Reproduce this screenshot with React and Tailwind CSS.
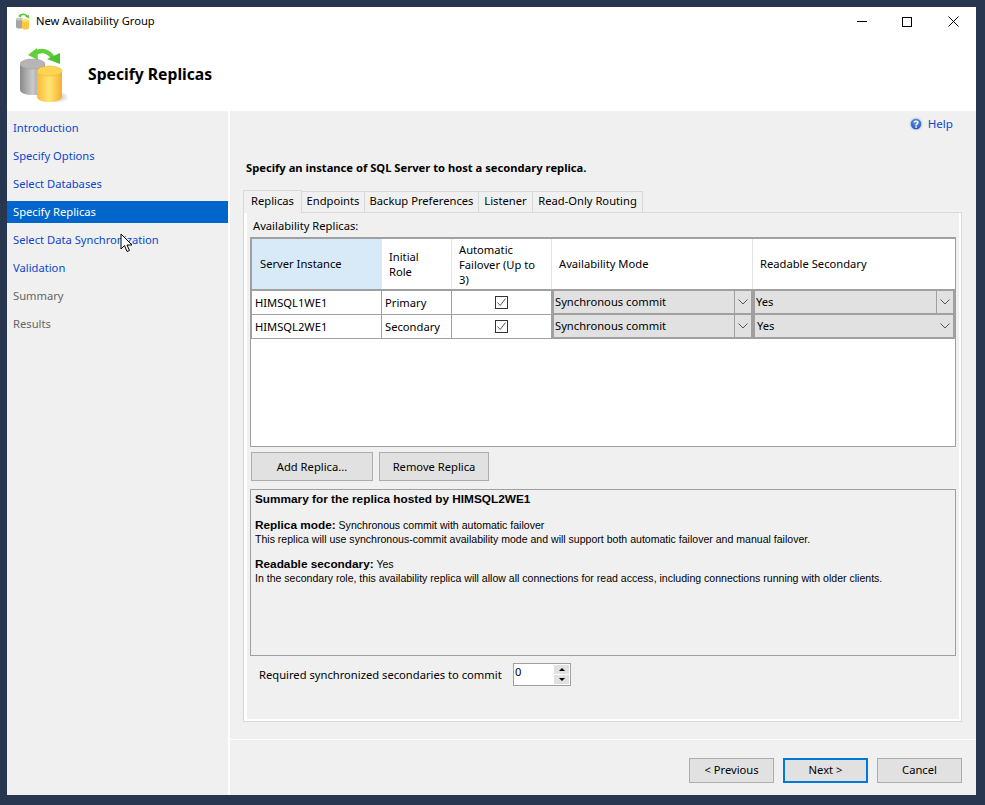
const ui = { fontFamily: '"Noto Sans", "Open Sans", sans-serif' };

function BigIcon() {
  return (
    <svg width="50" height="60" viewBox="0 0 50 60" className="block shrink-0">
      <defs>
        <linearGradient id="g1" x1="0" x2="1" y1="0" y2="0">
          <stop offset="0" stopColor="#8a8a8a" />
          <stop offset="0.5" stopColor="#c9c9c9" />
          <stop offset="1" stopColor="#8f8f8f" />
        </linearGradient>
        <linearGradient id="y1" x1="0" x2="1" y1="0" y2="0">
          <stop offset="0" stopColor="#fbb93a" />
          <stop offset="0.5" stopColor="#ffe673" />
          <stop offset="1" stopColor="#f7ad2e" />
        </linearGradient>
        <radialGradient id="sh" cx="0.5" cy="0.5" r="0.5">
          <stop offset="0" stopColor="#bbbbbb" />
          <stop offset="1" stopColor="#ffffff" />
        </radialGradient>
      </defs>
      <ellipse cx="38" cy="52" rx="11" ry="6" fill="url(#sh)" />
      <path d="M0 19v26c0 3 6 5 12.500 5S25 48 25 45V19z" fill="url(#g1)" />
      <ellipse cx="12.500" cy="19" rx="12.500" ry="5" fill="#b5b5b5" stroke="#9a9a9a" strokeWidth="0.5" />
      <path d="M17 26v26c0 3 6 5 12.500 5S42 55 42 52V26z" fill="url(#y1)" />
      <ellipse cx="29.500" cy="26" rx="12.500" ry="5" fill="#fdd552" stroke="#f0ae2c" strokeWidth="0.5" />
      <path d="M14 9C20 4 28 5 33 13" fill="none" stroke="#5fcf3c" strokeWidth="4.500" />
      <path d="M8 10l9-7 1 12z" fill="#5fcf3c" />
      <path d="M27 14l13-6v11z" fill="#4fc22e" />
    </svg>
  );
}

function SmallIcon() {
  return (
    <svg width="15" height="17" viewBox="0 0 15 17" className="block shrink-0">
      <path d="M0 6v8c0 1 2 1.500 3.500 1.500S7 15 7 14V6z" fill="#a5a5a5" />
      <ellipse cx="3.500" cy="6" rx="3.500" ry="1.500" fill="#c9c9c9" />
      <path d="M6 7v8c0 1 2 1.500 3.500 1.500S13 16 13 15V7z" fill="#fcc83f" />
      <ellipse cx="9.500" cy="7" rx="3.500" ry="1.500" fill="#ffe580" />
      <path d="M3.500 3C6 .500 9 .500 11 3" fill="none" stroke="#58c83a" strokeWidth="1.500" />
      <path d="M2 3l3-2 .3 3.500zM9 3.500l4-1.500v3.500z" fill="#58c83a" />
    </svg>
  );
}

function HelpIcon() {
  return (
    <svg width="14" height="14" viewBox="0 0 14 14" className="block">
      <defs>
        <radialGradient id="h1" cx="0.5" cy="0.35" r="0.7">
          <stop offset="0" stopColor="#6d9ee8" />
          <stop offset="1" stopColor="#1d4fb8" />
        </radialGradient>
      </defs>
      <circle cx="7" cy="7" r="6.500" fill="#c8d6ee" />
      <circle cx="7" cy="7" r="5.200" fill="url(#h1)" />
      <path d="M5 5.300C5.200 4 8.800 3.700 9 5.400c.1 1.400-1.900 1.600-1.900 3" fill="none" stroke="#fff" strokeWidth="1.500" />
      <rect x="6.300" y="9.300" width="1.600" height="1.500" fill="#fff" />
    </svg>
  );
}

function Chevron() {
  return (
    <svg width="10" height="6" viewBox="0 0 10 6" className="block">
      <path d="M.5 .5L5 5 9.500 .5" fill="none" stroke="#555" strokeWidth="1" />
    </svg>
  );
}

function Check() {
  return (
    <span className="w-[13px] h-[13px] border border-[#333] bg-white flex items-center justify-center">
      <svg width="11" height="11" viewBox="0 0 11 11" className="block">
        <path d="M1.500 5.500L4.200 8.500 9.500 1.500" fill="none" stroke="#555" strokeWidth="1" />
      </svg>
    </span>
  );
}

function Combo({ text, arrowBorder, pad }) {
  return (
    <div className="h-full flex items-center bg-[#e1e1e1] border-2 border-[#a0a0a0] border-t-0">
      <span className={`flex-1 truncate pt-px ${pad}`}>{text}</span>
      <span className={`w-[17px] h-full flex items-center justify-center ${arrowBorder ? "border-l border-[#a0a0a0]" : ""}`}>
        <Chevron />
      </span>
    </div>
  );
}

function Row({ name, role, last }) {
  const cell = "h-full flex items-center border-b border-[#a0a0a0] border-r px-[3px]";
  return (
    <div className="grid grid-cols-[130px_70px_100px_201px_202px] h-[24px] border-l border-[#a0a0a0]">
      <div className={`${cell} pt-px`}>{name}</div>
      <div className={`${cell} pt-px`}>{role}</div>
      <div className={`${cell} justify-center`}><Check /></div>
      <Combo text="Synchronous commit" arrowBorder pad="pl-[1px]" />
      <Combo text="Yes" arrowBorder={!last} pad={last ? "pl-[2px]" : "pl-[1px]"} />
    </div>
  );
}

function Btn({ children, className = "" }) {
  return (
    <button className={`flex items-center justify-center bg-[#e1e1e1] border border-[#adadad] ${className}`}>
      {children}
    </button>
  );
}

const nav = [
  ["Introduction", "link"],
  ["Specify Options", "link"],
  ["Select Databases", "link"],
  ["Specify Replicas", "sel"],
  ["Select Data Synchronization", "link"],
  ["Validation", "link"],
  ["Summary", "off"],
  ["Results", "off"],
];

export default function App() {
  return (
    <div className="w-[985px] h-[805px] bg-[#28364f] pt-[7px] pl-[7px] overflow-hidden text-[11.2px] text-black relative" style={ui}>
      <div className="w-[969px] h-[788px] bg-[#f0f0f0] flex flex-col">
        <div className="h-[104px] bg-white shrink-0 flex flex-col">
          <div className="h-[29px] flex items-center pl-[9px]">
            <SmallIcon />
            <span className="ml-[5px] flex-1">New Availability Group</span>
            <div className="flex items-center">
              <span className="w-[44px] h-[29px] flex items-center justify-center">
                <span className="w-[10px] h-px bg-black" />
              </span>
              <span className="w-[46px] h-[29px] flex items-center justify-center">
                <span className="w-[10px] h-[10px] border border-black" />
              </span>
              <span className="w-[46px] h-[29px] flex items-center justify-center">
                <svg width="11" height="11" viewBox="0 0 11 11"><path d="M.5 .5l10 10M10.500 .5l-10 10" stroke="#000" strokeWidth="1" /></svg>
              </span>
            </div>
          </div>
          <div className="flex-1 flex items-start pl-[13px] pt-[9px]">
            <BigIcon />
            <span className="ml-[18px] mt-[18px] text-[15.7px] leading-[22px] font-bold">Specify Replicas</span>
          </div>
        </div>

        <div className="flex-1 flex min-h-0">
          <div className="w-[223px] shrink-0 border-r-2 border-white pt-[3px]">
            {nav.map(([t, k]) => (
              <div key={t} className="h-[28px] py-[3px]">
                <div className={`h-[22px] flex items-center pl-[6px] ${k === "sel" ? "bg-[#0066cc] text-white" : k === "link" ? "text-[#0d47c9]" : "text-[#666]"}`}>
                  {t}
                </div>
              </div>
            ))}
          </div>

          <div className="flex-1 flex flex-col min-w-0">
            <div className="flex-1 border-b border-white flex flex-col pl-[13px] pr-[14px]">
              <div className="h-[26px] flex items-center justify-end pr-[9px] gap-[5px]">
                <HelpIcon />
                <span className="text-[#0d47c9] text-[11.6px]">Help</span>
              </div>
              <div className="mt-[22px] h-[18px] pl-[3px] flex items-center font-bold">
                Specify an instance of SQL Server to host a secondary replica.
              </div>

              <div className="mt-[12px] flex items-end h-[23px]">
                <div className="h-[23px] w-[59px] bg-[#f0f0f0] border border-b-0 border-[#d9d9d9] flex items-center justify-center pb-[2px] -mb-px z-10">Replicas</div>
                {[["Endpoints", "w-[63px]"], ["Backup Preferences", "w-[114px]"], ["Listener", "w-[54px]"], ["Read-Only Routing", "w-[110px]"]].map(([t, w]) => (
                  <div key={t} className={`h-[21px] ${w} bg-[#f0f0f0] border border-l-0 border-b-0 border-[#d9d9d9] flex items-center justify-center pb-px`}>{t}</div>
                ))}
              </div>

              <div className="h-[510px] w-[719px] border border-[#d9d9d9]">
                <div className="h-full border-white border-l-[3px] border-r-2 border-b-2 px-[3px] pt-[2px]">
                  <div className="h-[22px] flex items-center pl-[3px]">Availability Replicas:</div>
                  <div className="h-[210px] w-[706px] border border-[#a0a0a0] border-t-2 bg-white">
                    <div className="grid grid-cols-[130px_70px_100px_201px_202px] h-[52px] border-b-2 border-l border-[#a0a0a0]">
                      <div className="bg-[#d8e9f8] flex items-center pl-[8px] pt-px">Server Instance</div>
                      <div className="border-r border-[#e3e3e3] flex items-center pl-[7px] pr-[8px] leading-[15px]">Initial Role</div>
                      <div className="border-r border-[#e3e3e3] flex items-center pl-[7px] pr-[8px] leading-[15px]">Automatic Failover (Up to 3)</div>
                      <div className="border-r border-[#e3e3e3] flex items-center px-[7px] pt-px">Availability Mode</div>
                      <div className="flex items-center px-[7px] pt-px">Readable Secondary</div>
                    </div>
                    <Row name="HIMSQL1WE1" role="Primary" />
                    <Row name="HIMSQL2WE1" role="Secondary" last />
                  </div>

                  <div className="flex gap-[6px] mt-[5px] ml-px">
                    <Btn className="w-[122px] h-[29px] pt-px">Add Replica...</Btn>
                    <Btn className="w-[110px] h-[29px] pt-px">Remove Replica</Btn>
                  </div>

                  <div className="mt-[8px] w-[706px] h-[167px] border border-[#a0a0a0] pl-[4px] pt-[2px] text-[10.55px] leading-[14px]" style={{ fontFamily: '"Liberation Sans", Arial, sans-serif' }}>
                    <div className="font-bold text-[11.8px]">Summary for the replica hosted by HIMSQL2WE1</div>
                    <div className="mt-[12px]"><b className="text-[11.8px]">Replica mode:</b> Synchronous commit with automatic failover</div>
                    <div>This replica will use synchronous-commit availability mode and will support both automatic failover and manual failover.</div>
                    <div className="mt-[11px]"><b className="text-[11.8px]">Readable secondary:</b> Yes</div>
                    <div>In the secondary role, this availability replica will allow all connections for read access, including connections running with older clients.</div>
                  </div>

                  <div className="mt-[7px] flex items-center h-[23px] pl-[9px]">
                    <span className="w-[254px] whitespace-nowrap pt-[2px]">Required synchronized secondaries to commit</span>
                    <div className="w-[58px] h-[23px] border border-[#a0a0a0] bg-white flex">
                      <span className="flex-1 pl-[1px] leading-[15px]">0</span>
                      <div className="w-[15px] my-[1px] mr-[1px] flex flex-col gap-px bg-white">
                        <div className="flex-1 bg-[#e1e1e1] flex items-center justify-center">
                          <span className="border-x-[3px] border-x-transparent border-b-[3px] border-b-black" />
                        </div>
                        <div className="flex-1 bg-[#e1e1e1] flex items-center justify-center">
                          <span className="border-x-[3px] border-x-transparent border-t-[3px] border-t-black" />
                        </div>
                      </div>
                    </div>
                  </div>
                </div>
              </div>
              <div className="h-[17px]" />
            </div>

            <div className="h-[56px] shrink-0 flex justify-end gap-[9px] pt-[18px] pr-[14px]">
              <Btn className="w-[85px] h-[25px]">&lt; Previous</Btn>
              <Btn className="w-[85px] h-[25px] !border-2 !border-[#0078d7]">Next &gt;</Btn>
              <Btn className="w-[85px] h-[25px]">Cancel</Btn>
            </div>
          </div>
        </div>
      </div>

      <svg width="14" height="20" viewBox="0 0 14 20" className="absolute left-[120px] top-[233px]">
        <path d="M1 1v15l3.500-3.500 2.500 6 2.500-1-2.500-5.500H12z" fill="#fff" stroke="#000" strokeWidth="1" />
      </svg>
    </div>
  );
}
